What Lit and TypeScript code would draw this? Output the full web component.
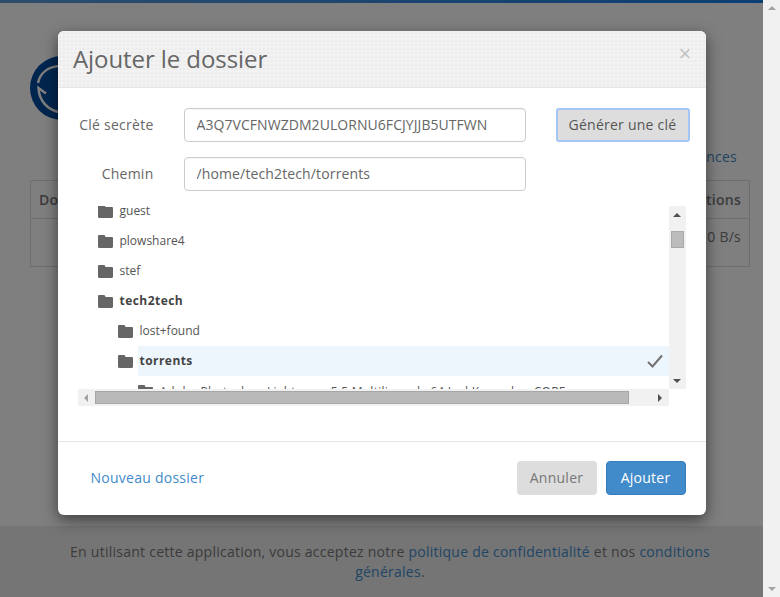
import { LitElement, html, css, svg } from 'lit';
import { customElement } from 'lit/decorators.js';

const folderIcon = svg`<path d="M1.2 0h4.6c.7 0 1 .3 1.3 1l.5 1h6.2c.7 0 1.2.5 1.2 1.2v8.6c0 .7-.5 1.2-1.2 1.2H1.2C.5 13 0 12.5 0 11.8V1.2C0 .5.5 0 1.2 0z" fill="#666"/>`;

const rows = [
  { name: 'guest', depth: 0 },
  { name: 'plowshare4', depth: 0 },
  { name: 'stef', depth: 0 },
  { name: 'tech2tech', depth: 0, bold: true },
  { name: 'lost+found', depth: 1 },
  { name: 'torrents', depth: 1, bold: true, selected: true },
  { name: 'Adobe Photoshop Lightroom 5.5 Multilingual x64 Incl Keymaker-CORE', depth: 2, long: true },
];

@customElement('app-root')
export class AppRoot extends LitElement {
  static styles = css`
    :host {
      display: flex;
      width: 780px;
      height: 597px;
      overflow: hidden;
      font-family: 'Open Sans', sans-serif;
      font-size: 14px;
      letter-spacing: 0.25px;
      color: #777;
      background: #fff;
    }
    * {
      box-sizing: border-box;
    }
    a {
      color: #428bca;
      text-decoration: none;
    }

    .page {
      position: relative;
      flex: 1;
      display: flex;
      flex-direction: column;
      min-width: 0;
    }
    .topbar {
      height: 3px;
      background: linear-gradient(90deg, #5a9ad8, #167ee8);
    }
    .main {
      flex: 1;
      padding: 53px 13px 0 30px;
    }
    .logo {
      display: block;
      width: 64px;
      height: 64px;
    }
    .prefs {
      margin-top: 27px;
      padding-right: 13px;
      height: 20px;
      line-height: 20px;
      text-align: right;
    }
    table {
      width: 100%;
      margin-top: 13px;
      border-collapse: collapse;
    }
    th,
    td {
      border: 1px solid #ddd;
      padding: 8px;
      height: 38px;
      line-height: 20px;
      text-align: left;
    }
    td {
      height: 48px;
      vertical-align: top;
    }
    th:last-child,
    td:last-child {
      text-align: right;
    }
    th {
      font-weight: 600;
    }
    .footer {
      height: 71px;
      padding: 16px 50px 0 67px;
      background: #eaeaea;
      line-height: 20px;
      text-align: center;
    }

    .backdrop {
      position: absolute;
      inset: 0;
      padding-top: 31px;
      background: rgba(0, 0, 0, 0.5);
    }
    .modal {
      width: 648px;
      margin: 0 auto;
      background: #fff;
      border-radius: 6px;
      box-shadow: 0 5px 15px rgba(0, 0, 0, 0.5);
      color: #666;
    }
    .modal-header {
      display: flex;
      justify-content: space-between;
      height: 57px;
      padding: 11px 14px 11px 15.5px;
      border-bottom: 1px solid #e5e5e5;
      border-radius: 6px 6px 0 0;
      background-color: #f2f2f2;
      background-image: radial-gradient(#ebebeb 1px, transparent 1px);
      background-size: 4px 4px;
    }
    .modal-header h4 {
      margin: 0;
      font-size: 24px;
      font-weight: 400;
      letter-spacing: -0.08px;
      line-height: 34px;
      color: #666;
    }
    .close {
      font-family: 'Liberation Sans', sans-serif;
      font-size: 22px;
      font-weight: 400;
      line-height: 24px;
      color: #c4c4c4;
    }
    .modal-body {
      padding: 20px 16px 35px 20px;
    }
    .form {
      display: grid;
      grid-template-columns: 76px 342px 134px;
      column-gap: 30px;
      row-gap: 15px;
      align-items: center;
    }
    .form label {
      padding-bottom: 2px;
      text-align: right;
      font-weight: 500;
    }
    .form input {
      width: 100%;
      height: 34px;
      padding: 0 12px 2px;
      border: 1px solid #ccc;
      border-radius: 4px;
      font: inherit;
      color: #666;
      outline: none;
      box-shadow: inset 0 1px 1px rgba(0, 0, 0, 0.04);
    }
    .form input.key {
      letter-spacing: 0.06px;
    }
    .form input.path {
      letter-spacing: 0.13px;
    }
    .generate {
      height: 34px;
      padding: 0 0 2px;
      border: 2px solid #a3c6f7;
      border-radius: 3px;
      background: #ddd;
      font: inherit;
      letter-spacing: inherit;
      color: #555;
    }

    .tree {
      display: grid;
      grid-template-columns: 591px 17px;
      grid-template-rows: 183px 17px;
      margin-top: 15px;
    }
    .viewport {
      overflow: hidden;
    }
    .list {
      margin-top: -10px;
    }
    .row {
      display: flex;
      align-items: center;
      height: 30px;
      font-size: 12px;
      letter-spacing: 0;
      white-space: nowrap;
      color: #555;
    }
    .row.bold {
      font-weight: 700;
      letter-spacing: 0.45px;
      color: #444;
    }
    .row.long {
      letter-spacing: 0.26px;
    }
    .row svg {
      flex: none;
      width: 15px;
      height: 13px;
      margin-right: 7px;
    }
    .label {
      flex: 1;
      display: flex;
      align-items: center;
      justify-content: space-between;
      height: 100%;
      margin-left: -2px;
      padding-left: 2px;
      padding-right: 6px;
    }
    .label span {
      padding-bottom: 2px;
    }
    .row.long .label span {
      padding-bottom: 0;
    }
    .label.selected {
      background: #eef6fd;
    }
    .label svg.check {
      width: 16px;
      height: 14px;
      margin: 0;
    }

    .sb {
      display: flex;
      background: #f1f1f1;
    }
    .sb.v {
      flex-direction: column;
      justify-content: space-between;
      align-items: center;
      position: relative;
    }
    .sb.h {
      align-items: center;
    }
    .sb .btn {
      flex: none;
      width: 17px;
      height: 17px;
      display: flex;
      align-items: center;
      justify-content: center;
    }
    .thumb-v {
      position: absolute;
      top: 25px;
      left: 2px;
      width: 13px;
      height: 17px;
      background: #bcbcbc;
      border: 1px solid #aaa;
    }
    .thumb-h {
      width: 534px;
      height: 13px;
      background: #b9b9b9;
      border: 1px solid #a6a6a6;
    }
    .spacer {
      flex: 1;
    }
    .arrow {
      width: 0;
      height: 0;
      border: 4px solid transparent;
    }
    .arrow.up {
      border-top: 0;
      border-bottom-color: #505050;
    }
    .arrow.down {
      border-bottom: 0;
      border-top-color: #505050;
    }
    .arrow.left {
      border-left: 0;
      border-right-color: #a3a3a3;
    }
    .arrow.right {
      border-right: 0;
      border-left-color: #505050;
    }

    .modal-footer {
      display: flex;
      align-items: center;
      gap: 9px;
      padding: 19px 20px 20px 33px;
      border-top: 1px solid #e5e5e5;
    }
    .modal-footer a {
      margin-right: auto;
      padding-bottom: 2px;
    }
    .btn-cancel,
    .btn-add {
      width: 80px;
      height: 34px;
      padding: 0 0 2px;
      border: 1px solid transparent;
      border-radius: 4px;
      font: inherit;
      letter-spacing: inherit;
    }
    .btn-cancel {
      background: #ddd;
      color: #777;
    }
    .btn-add {
      background: #428bca;
      border-color: #357ebd;
      color: #fff;
    }

    .page-scrollbar {
      flex: none;
      width: 17px;
      height: 100%;
      display: flex;
      flex-direction: column;
      justify-content: space-between;
      align-items: center;
      padding: 6px 0;
      background: #f1f1f1;
    }
    .page-scrollbar .arrow.up {
      border-bottom-color: #a3a3a3;
    }
    .page-scrollbar .arrow.down {
      border-top-color: #a3a3a3;
    }
  `;

  renderLogo() {
    return html`<svg class="logo" viewBox="0 0 64 64">
      <circle cx="32" cy="32" r="32" fill="#004c9e" />
      <g fill="none" stroke="#fff" stroke-width="2.5">
        <path d="M8 27C10 17 18 11 29 10" />
        <path d="M16 37.5L8.5 32C9 45 18 54 29 56" />
        <path d="M35 10C46 11 54 18 56 29" />
        <path d="M35 56C46 54 54 46 56 37" />
      </g>
    </svg>`;
  }

  renderRow(row: (typeof rows)[number]) {
    const cls = `row ${row.bold ? 'bold' : ''} ${row.long ? 'long' : ''}`;
    return html`<div class=${cls} style="padding-left:${20 + row.depth * 20}px">
      <svg viewBox="0 0 15 13">${folderIcon}</svg>
      <div class="label ${row.selected ? 'selected' : ''}">
        <span>${row.name}</span>
        ${row.selected
          ? html`<svg class="check" viewBox="0 0 16 14">
              <path d="M1 8l4.5 4.5L15 1.5" fill="none" stroke="#707070" stroke-width="2" />
            </svg>`
          : ''}
      </div>
    </div>`;
  }

  render() {
    return html`
      <div class="page">
        <div class="topbar"></div>
        <div class="main">
          ${this.renderLogo()}
          <div class="prefs"><a href="#">Préférences</a></div>
          <table>
            <tr><th>Dossier</th><th>Actions</th></tr>
            <tr><td></td><td>0 B/s</td></tr>
          </table>
        </div>
        <div class="footer">
          En utilisant cette application, vous acceptez notre
          <a href="#">politique de confidentialité</a> et nos
          <a href="#">conditions générales</a>.
        </div>

        <div class="backdrop">
          <div class="modal">
            <div class="modal-header">
              <h4>Ajouter le dossier</h4>
              <span class="close">×</span>
            </div>
            <div class="modal-body">
              <div class="form">
                <label>Clé secrète</label>
                <input class="key" value="A3Q7VCFNWZDM2ULORNU6FCJYJJB5UTFWN" />
                <button class="generate">Générer une clé</button>
                <label>Chemin</label>
                <input class="path" value="/home/tech2tech/torrents" />
              </div>
              <div class="tree">
                <div class="viewport">
                  <div class="list">${rows.map((r) => this.renderRow(r))}</div>
                </div>
                <div class="sb v">
                  <div class="btn"><div class="arrow up"></div></div>
                  <div class="thumb-v"></div>
                  <div class="btn"><div class="arrow down"></div></div>
                </div>
                <div class="sb h">
                  <div class="btn"><div class="arrow left"></div></div>
                  <div class="thumb-h"></div>
                  <div class="spacer"></div>
                  <div class="btn"><div class="arrow right"></div></div>
                </div>
              </div>
            </div>
            <div class="modal-footer">
              <a href="#">Nouveau dossier</a>
              <button class="btn-cancel">Annuler</button>
              <button class="btn-add">Ajouter</button>
            </div>
          </div>
        </div>
      </div>
      <div class="page-scrollbar">
        <div class="arrow up"></div>
        <div class="arrow down"></div>
      </div>
    `;
  }
}
